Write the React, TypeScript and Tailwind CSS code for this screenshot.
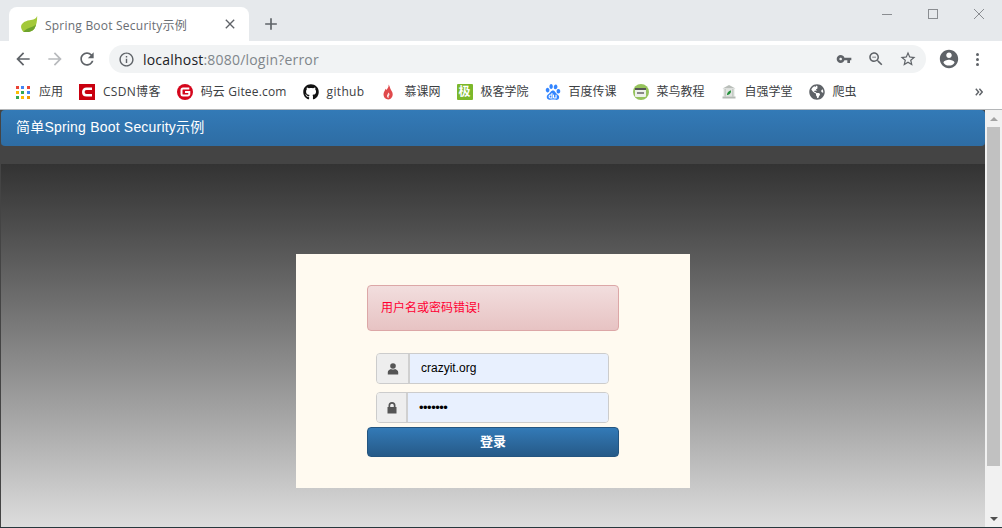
import React from "react";
import { FaGithub, FaGlobeAmericas } from "react-icons/fa";
import { RiBaiduFill } from "react-icons/ri";

const cjk = "font-['Open_Sans','Noto_Sans_CJK_SC',sans-serif]";
const pageFont = "font-['Liberation_Sans','Noto_Sans_CJK_SC',sans-serif]";

const Icon = ({ d, className }: { d: string; className: string }) => (
  <svg viewBox="0 0 24 24" fill="currentColor" className={className}>
    <path d={d} />
  </svg>
);

const AppsIcon = () => {
  const colors = ["#ea4335", "#4285f4", "#ea4335", "#fbbc04", "#34a853", "#4285f4", "#34a853", "#fbbc04", "#f29900"];
  return (
    <div className="grid w-[14px] grid-cols-3 gap-[2px]">
      {colors.map((c, i) => (
        <div key={i} className="h-[3px] w-[3px]" style={{ backgroundColor: c }} />
      ))}
    </div>
  );
};

const Favicon16 = ({ children, className = "" }: { children: React.ReactNode; className?: string }) => (
  <div className={`flex h-4 w-4 items-center justify-center ${className}`}>{children}</div>
);

const bookmarks: { label: string; text?: string; icon: React.ReactNode }[] = [
  {
    label: "CSDN博客",
    text: "tracking-[0.3px]",
    icon: (
      <Favicon16 className="bg-[#c9000f]">
        <svg viewBox="0 0 16 16" className="h-4 w-4">
          <path d="M13 4.700H7.500C5.500 4.700 4.300 6.200 4.300 8s1.200 3.300 3.200 3.300H13" fill="none" stroke="#fff" strokeWidth="2.600" />
        </svg>
      </Favicon16>
    ),
  },
  {
    label: "码云 Gitee.com",
    text: "tracking-[0.17px]",
    icon: (
      <Favicon16 className="rounded-full bg-[#d5061c]">
        <svg viewBox="0 0 16 16" className="h-4 w-4">
          <path d="M12.300 4.500H6a1.500 1.500 0 0 0-1.500 1.500v4A1.500 1.500 0 0 0 6 11.500h4.800a1.500 1.500 0 0 0 1.500-1.500V8H8" fill="none" stroke="#fff" strokeWidth="2" />
        </svg>
      </Favicon16>
    ),
  },
  { label: "github", text: "tracking-[0.33px]", icon: <FaGithub className="h-4 w-4 text-[#111]" /> },
  {
    label: "慕课网",
    icon: (
      <Favicon16>
        <svg viewBox="0 0 16 16" className="h-4 w-4">
          <path d="M8.500 0.500c.6 2.400-1 3.800-2 5.500-.3-.6-.6-1-1-1.300C5.300 6.400 3.500 8 3.500 10.300c0 2.900 2.100 5.200 4.800 5.200s4.400-2.500 4.400-5.200c0-2.600-1.700-3.800-2.300-5.500-.4-1.400-.9-3.100-1.900-4.300z" fill="#e0494b" />
          <path d="M8 8.500c.5 1.400-1.500 2.300-1 4 .3 1 1.200 1.500 2 1.200-1-.8-.2-1.800.4-2.700C9.900 10.100 9 9 8 8.500z" fill="#fbe3e3" />
        </svg>
      </Favicon16>
    ),
  },
  {
    label: "极客学院",
    icon: (
      <Favicon16 className={`rounded-[1px] bg-[#7cb82a] text-[12px] font-bold leading-none text-white ${cjk}`}>极</Favicon16>
    ),
  },
  { label: "百度传课", icon: <RiBaiduFill className="h-4 w-4 scale-125 text-[#3385ff]" /> },
  {
    label: "菜鸟教程",
    icon: (
      <Favicon16 className="rounded-full bg-[#96c35c]">
        <div className="flex h-[9px] w-[11px] flex-col rounded-[1px] bg-[#eef1ea]">
          <div className="h-[2px] bg-[#555]" />
          <div className="mx-auto mt-[2px] h-[2px] w-[7px] bg-[#888]" />
        </div>
      </Favicon16>
    ),
  },
  {
    label: "自强学堂",
    icon: (
      <Favicon16>
        <svg viewBox="0 0 16 16" className="h-4 w-4">
          <path d="M8 1 14.500 4.500H1.500z" fill="#b9beb9" />
          <rect x="2.500" y="5" width="11" height="7.500" fill="#dfe3df" />
          <rect x="3.500" y="5" width="1.500" height="7.500" fill="#c6cbc6" />
          <rect x="11" y="5" width="1.500" height="7.500" fill="#c6cbc6" />
          <rect x="1.500" y="12.500" width="13" height="2" fill="#b4b9b4" />
          <path d="M6 11c0-2.300 2-4.500 4-4.500 .3 2.200-1.500 4.500-4 4.500z" fill="#22903a" />
        </svg>
      </Favicon16>
    ),
  },
  { label: "爬虫", icon: <FaGlobeAmericas className="h-4 w-4 text-[#5f6368]" /> },
];

const Chrome = () => (
  <div className={`flex flex-col ${cjk}`}>
    {/* tab strip */}
    <div className="flex h-[41px] items-end bg-[#e6e9ec] pl-[9px]">
      <div className="flex h-[34px] w-[240px] items-center rounded-t-lg bg-white pl-[12px] pr-[11px]">
        <svg viewBox="0 0 16 16" className="h-4 w-4 shrink-0 scale-110">
          <path d="M15.500 .5c-1 3-3.500 3.500-7 4C4 5.200.5 7.500.8 11c.2 1.500 1 3 2 4 3.500.8 8 .3 10.200-3 1.700-2.500 2.500-7 2.500-11.500z" fill="#a3c93a" />
          <path d="M2.800 15c3.500.8 8 .3 10.200-3 .6-.9 1.100-2.200 1.500-3.700C11.500 11.500 7 11 2.800 15z" fill="#6ea32d" />
        </svg>
        <span className="ml-2 flex-1 whitespace-nowrap pt-[3px] text-[12px] tracking-[0.22px] text-[#6a6e73]">Spring Boot Security示例</span>
        <Icon d="M19 6.410 17.590 5 12 10.590 6.410 5 5 6.410 10.590 12 5 17.590 6.410 19 12 13.410 17.590 19 19 17.590 13.410 12z" className="h-4 w-4 text-[#5f6368]" />
      </div>
      <div className="mb-[7px] ml-[12px] text-[#5f6368]">
        <Icon d="M19 13h-6v6h-2v-6H5v-2h6V5h2v6h6v2z" className="h-5 w-5" />
      </div>
      <div className="mb-[21px] ml-auto flex items-center text-[#80868b]">
        <div className="h-px w-[10px] bg-[#8a8d91]" />
        <div className="ml-[36px] h-[10px] w-[10px] border border-[#8a8d91]" />
        <svg viewBox="0 0 12 12" className="ml-[35px] mr-[17px] h-[12px] w-[12px]">
          <path d="M1 1l10 10M11 1 1 11" stroke="#8a8d91" strokeWidth="1" />
        </svg>
      </div>
    </div>
    {/* toolbar */}
    <div className="flex h-[37px] items-center bg-white pb-px pl-[13px] text-[#5f6368]">
      <Icon d="M20 11H7.830l5.590-5.590L12 4l-8 8 8 8 1.410-1.410L7.830 13H20v-2z" className="h-5 w-5" />
      <Icon d="M12 4l-1.410 1.410L16.170 11H4v2h12.170l-5.580 5.590L12 20l8-8z" className="ml-[12px] h-5 w-5 text-[#b8babd]" />
      <Icon d="M17.650 6.350C16.200 4.900 14.210 4 12 4c-4.420 0-7.990 3.580-7.990 8s3.570 8 7.990 8c3.730 0 6.840-2.550 7.730-6h-2.080c-.82 2.330-3.040 4-5.650 4-3.310 0-6-2.690-6-6s2.690-6 6-6c1.660 0 3.140.69 4.220 1.780L13 11h7V4l-2.350 2.350z" className="ml-[12px] h-5 w-5" />
      <div className="ml-[12px] flex h-[28px] w-[817px] items-center rounded-full bg-[#f1f3f4] pl-[9px] pr-[9px]">
        <Icon d="M11 7h2v2h-2zm0 4h2v6h-2zm1-9C6.480 2 2 6.480 2 12s4.480 10 10 10 10-4.480 10-10S17.520 2 12 2zm0 18c-4.410 0-8-3.590-8-8s3.590-8 8-8 8 3.590 8 8-3.590 8-8 8z" className="h-[17px] w-[17px]" />
        <span className="ml-[8px] flex-1 text-[14px] tracking-[0.2px] text-[#80868b]">
          <span className="text-[#202124]">localhost</span>:8080/login?error
        </span>
        <Icon d="M12.650 10C11.830 7.670 9.610 6 7 6c-3.310 0-6 2.690-6 6s2.690 6 6 6c2.610 0 4.830-1.670 5.650-4H17v4h4v-4h2v-4H12.650zM7 14c-1.100 0-2-.9-2-2s.9-2 2-2 2 .9 2 2-.9 2-2 2z" className="h-4 w-4" />
        <Icon d="M15.500 14h-.79l-.28-.27C15.410 12.590 16 11.110 16 9.500 16 5.910 13.090 3 9.500 3S3 5.910 3 9.500 5.910 16 9.500 16c1.610 0 3.090-.59 4.230-1.570l.27.28v.79l5 4.990L20.490 19l-4.990-5zm-6 0C7.010 14 5 11.990 5 9.500S7.010 5 9.500 5 14 7.010 14 9.500 11.990 14 9.500 14zM7 9h5v1H7z" className="ml-[15px] h-[18px] w-[18px]" />
        <Icon d="M22 9.240l-7.190-.62L12 2 9.190 8.630 2 9.240l5.460 4.730L5.820 21 12 17.270 18.180 21l-1.630-7.030L22 9.240zM12 15.400l-3.760 2.270 1-4.280-3.320-2.880 4.380-.38L12 6.100l1.710 4.040 4.380.38-3.320 2.880 1 4.280L12 15.400z" className="ml-[14px] h-[18px] w-[18px]" />
      </div>
      <Icon d="M12 2C6.480 2 2 6.480 2 12s4.480 10 10 10 10-4.480 10-10S17.520 2 12 2zm0 3c1.660 0 3 1.340 3 3s-1.340 3-3 3-3-1.340-3-3 1.340-3 3-3zm0 14.200c-2.500 0-4.710-1.280-6-3.220.03-1.990 4-3.080 6-3.080 1.990 0 5.970 1.090 6 3.080-1.290 1.940-3.500 3.220-6 3.220z" className="ml-[12px] h-[22px] w-[22px]" />
      <div className="ml-[16px] flex flex-col gap-[2px]">
        <div className="h-[3px] w-[3px] rounded-full bg-[#5f6368]" />
        <div className="h-[3px] w-[3px] rounded-full bg-[#5f6368]" />
        <div className="h-[3px] w-[3px] rounded-full bg-[#5f6368]" />
      </div>
    </div>
    {/* bookmarks bar */}
    <div className="flex h-[32px] items-center gap-4 border-b border-[#b4b6b8] bg-white pb-[3px] pl-[16px] text-[12px] text-[#3c4043]">
      <div className="flex items-center gap-[9px]">
        <AppsIcon />
        <span>应用</span>
      </div>
      {bookmarks.map((b) => (
        <div key={b.label} className="flex items-center gap-2 whitespace-nowrap">
          {b.icon}
          <span className={b.text}>{b.label}</span>
        </div>
      ))}
      <svg viewBox="0 0 10 10" className="ml-auto mr-[19px] h-[8px] w-[8px]">
        <path d="M1 1l3.500 4L1 9M5.500 1 9 5 5.500 9" fill="none" stroke="#5f6368" strokeWidth="1.800" />
      </svg>
    </div>
  </div>
);

const Scrollbar = () => (
  <div className="flex w-[17px] shrink-0 flex-col items-center bg-[#f1f1f1]">
    <div className="flex h-[17px] items-center justify-center">
      <div className="h-0 w-0 border-x-[4px] border-b-[4px] border-x-transparent border-b-[#a3a3a3]" />
    </div>
    <div className="h-[339px] w-[13px] bg-[#c1c1c1]" />
    <div className="flex flex-1 items-end justify-center pb-[6px]">
      <div className="h-0 w-0 border-x-[4px] border-t-[4px] border-x-transparent border-t-[#505050]" />
    </div>
  </div>
);

const LoginCard = () => (
  <div className="mx-auto mt-[90px] flex h-[234px] w-[394px] flex-col bg-[#fffaf0] pt-[31px]">
    <div className="mx-[71px] flex h-[46px] items-center rounded border border-[#dca7a7] bg-gradient-to-b from-[#f2dede] to-[#e7c3c3] px-[13px] text-[12px] text-[#ff0033]">
      用户名或密码错误!
    </div>
    <div className="ml-[80px] mt-[22px] flex h-[31px] w-[233px] overflow-hidden rounded border border-[#cccccc] text-[12px] shadow-[inset_0_0_0_1px_#d8d8d8]">
      <div className="flex w-[33px] items-center justify-center border-r-2 border-[#d0d0d0] bg-[#eeeeee]">
        <svg viewBox="0 0 12 12" className="h-[12px] w-[12px] text-[#555]" fill="currentColor">
          <circle cx="6" cy="3" r="2.800" />
          <path d="M.8 11.500V9c0-1.500 1.700-2.500 3.200-3 1 .8 3 .8 4 0 1.500.5 3.200 1.500 3.200 3v2.500z" />
        </svg>
      </div>
      <div className="flex flex-1 items-center bg-[#e8f0fe] pb-px pl-[11px] text-black">crazyit.org</div>
    </div>
    <div className="ml-[80px] mt-[8px] flex h-[31px] w-[233px] overflow-hidden rounded border border-[#cccccc] text-[12px]">
      <div className="flex w-[31px] items-center justify-center border-r-2 border-[#d0d0d0] bg-[#eeeeee]">
        <svg viewBox="0 0 12 12" className="h-[12px] w-[12px] text-[#555]" fill="currentColor">
          <path d="M2.500 5V3.500a3.500 3.500 0 0 1 7 0V5h1v6.500h-9V5zm1.700 0h3.600V3.500a1.800 1.800 0 0 0-3.600 0z" />
        </svg>
      </div>
      <div className="flex flex-1 items-center bg-[#e8f0fe] pl-[11px] text-[13px] leading-none tracking-[-0.5px] text-black">•••••••</div>
    </div>
    <button className="mx-[71px] mt-[4px] h-[30px] rounded border border-[#245580] bg-gradient-to-b from-[#337ab7] to-[#265a88] pb-px text-[13px] font-bold text-white">
      登录
    </button>
  </div>
);

export default function App() {
  return (
    <div className={`flex h-[528px] w-[1002px] flex-col overflow-hidden bg-white ${pageFont}`}>
      <Chrome />
      <div className="flex h-[417px]">
        <div className="flex min-w-0 flex-1 flex-col border-l border-[#444] bg-[#444444]">
          <div className="flex h-[36px] items-center rounded border-b border-[#2e6da4] bg-gradient-to-b from-[#337ab7] to-[#2e6da4] px-[15px] pb-px text-[14px] tracking-[0.2px] text-white">
            简单Spring Boot Security示例
          </div>
          <div className="h-[18px] bg-[#444444]" />
          <div className="min-h-0 flex-1 bg-gradient-to-b from-[#333333] to-[#dddddd]">
            <LoginCard />
          </div>
        </div>
        <Scrollbar />
      </div>
      <div className="h-px bg-[#27383d]" />
    </div>
  );
}
